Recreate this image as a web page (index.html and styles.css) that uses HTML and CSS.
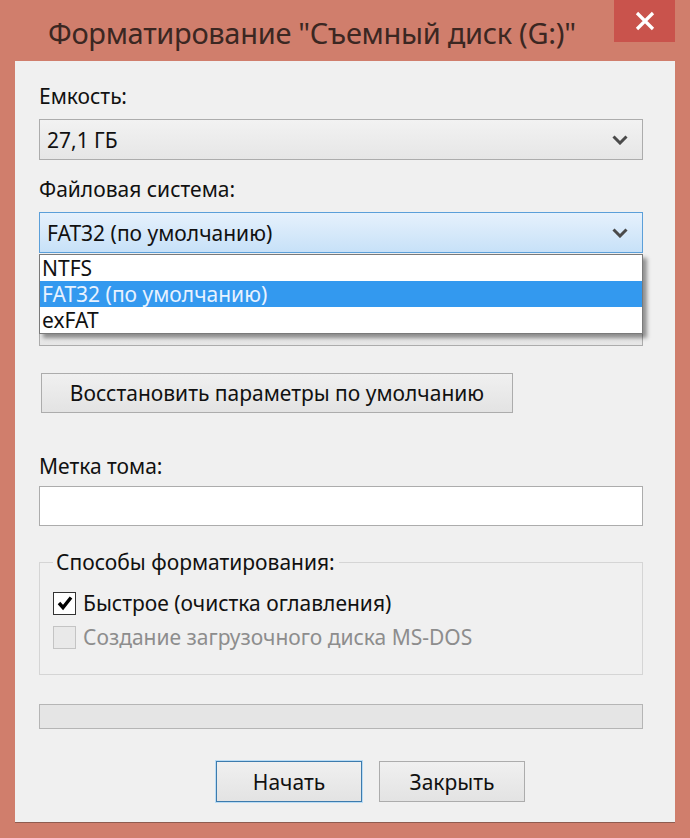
FILE: index.html
```html
<!DOCTYPE html>
<html lang="ru">
<head>
    <meta charset="UTF-8">
    <title>Форматирование</title>
    <link rel="stylesheet" href="styles.css">
</head>
<body>

<div class="window">
    <div class="titlebar">
        <h1 class="title">Форматирование "Съемный диск (G:)"</h1>
        <div class="close">
            <svg width="22" height="22" viewBox="0 0 22 22"><path d="M3 3 L19 19 M19 3 L3 19" stroke="#fff" stroke-width="3.2" fill="none"/></svg>
        </div>
    </div>

    <div class="client">
        <div class="label first">Емкость:</div>
        <div class="combo">
            <span>27,1 ГБ</span>
            <svg class="chev" width="16" height="10" viewBox="0 0 16 10"><path d="M1.5 1.5 L8 8 L14.5 1.5" stroke="#4a4a4a" stroke-width="3" fill="none"/></svg>
        </div>

        <div class="label">Файловая система:</div>
        <div class="fs-wrap">
            <div class="combo active">
                <span>FAT32 (по умолчанию)</span>
                <svg class="chev" width="16" height="10" viewBox="0 0 16 10"><path d="M1.5 1.5 L8 8 L14.5 1.5" stroke="#4a4a4a" stroke-width="3" fill="none"/></svg>
            </div>
            <ul class="droplist">
                <li>NTFS</li>
                <li class="selected">FAT32 (по умолчанию)</li>
                <li>exFAT</li>
            </ul>
        </div>

        <!-- cluster size row, covered by the open list -->
        <div class="label"></div>
        <div class="combo"></div>

        <button class="btn restore">Восстановить параметры по умолчанию</button>

        <div class="label volume">Метка тома:</div>
        <div class="textbox"></div>

        <fieldset class="group">
            <legend>Способы форматирования:</legend>
            <div class="check-row">
                <span class="box checked">
                    <svg width="18" height="18" viewBox="0 0 18 18"><path d="M3 9 L7 13.5 L15 3.5" stroke="#000" stroke-width="3.4" fill="none"/></svg>
                </span>
                <span>Быстрое (очистка оглавления)</span>
            </div>
            <div class="check-row disabled">
                <span class="box"></span>
                <span>Создание загрузочного диска MS-DOS</span>
            </div>
        </fieldset>

        <div class="progress"></div>

        <div class="actions">
            <button class="btn default">Начать</button>
            <button class="btn">Закрыть</button>
        </div>
    </div>
</div>

</body>
</html>
```

FILE: styles.css
```css
/* Basic Reset */
* {
    margin: 0;
    padding: 0;
    box-sizing: border-box;
}

body {
    width: 690px;
    height: 838px;
    background: #d07e6c;
    font-family: 'Noto Sans', 'Open Sans', sans-serif;
    color: #111;
    overflow: hidden;
}

.window {
    height: 838px;
    display: flex;
    flex-direction: column;
}

.titlebar {
    height: 61px;
    display: flex;
    align-items: flex-start;
    justify-content: space-between;
    padding-left: 48px;
    padding-right: 15px;
}

.title {
    font-weight: normal;
    font-size: 29px;
    line-height: 30px;
    margin-top: 18px;
    color: #3b2722;
    letter-spacing: -0.3px;
    white-space: nowrap;
}

.close {
    width: 61px;
    height: 42px;
    background: #c9534c;
    display: flex;
    align-items: center;
    justify-content: center;
}

.client {
    margin: 0 15px;
    height: 762px;
    background: #f0f0f0;
    border-bottom: 1px solid #8e5c50;
    padding: 22px 32px 0 24px;
    display: flex;
    flex-direction: column;
    align-items: flex-start;
    font-size: 21px;
}

.label {
    height: 26px;
    line-height: 26px;
    margin-top: 16px;
    white-space: nowrap;
}

.label.first {
    margin-top: 0;
}

.combo {
    width: 604px;
    height: 41px;
    margin-top: 10px;
    border: 1px solid #acacac;
    background: linear-gradient(#f2f2f2, #e6e6e6);
    display: flex;
    align-items: center;
    justify-content: space-between;
    padding: 0 14px 0 7px;
}

.combo.active {
    border-color: #5b9fd9;
    background: linear-gradient(#e6f1fc, #c7e1f8);
}

.fs-wrap {
    position: relative;
}

.droplist {
    position: absolute;
    left: 0;
    top: 52px;
    width: 604px;
    list-style: none;
    background: #fff;
    border: 1px solid #7a7a7a;
    box-shadow: 4px 4px 4px rgba(0, 0, 0, 0.4);
    z-index: 2;
}

.droplist li {
    height: 26px;
    line-height: 26px;
    padding-left: 2px;
}

.droplist li.selected {
    background: #3399ef;
    color: #e8f2ff;
}

.btn {
    font-family: inherit;
    font-size: 21px;
    color: #111;
    background: linear-gradient(#f0f0f0, #e3e3e3);
    border: 1px solid #acacac;
    height: 40px;
    cursor: pointer;
}

.restore {
    width: 472px;
    margin: 27px 0 0 2px;
}

.label.volume {
    margin-top: 40px;
}

.textbox {
    width: 604px;
    height: 40px;
    margin-top: 7px;
    background: #fff;
    border: 1px solid #acacac;
}

.group {
    width: 604px;
    margin-top: 23px;
    border: 1px solid #d5d5d5;
    padding: 11px 14px 20px 13px;
}

.group legend {
    padding: 0 4px 0 3px;
    margin-left: 0;
    line-height: 26px;
}

.check-row {
    display: flex;
    align-items: center;
    gap: 7px;
    height: 34px;
}

.box {
    width: 23px;
    height: 23px;
    border: 1px solid #333;
    background: #fff;
    display: flex;
    align-items: center;
    justify-content: center;
}

.check-row.disabled {
    color: #8d8d8d;
}

.check-row.disabled .box {
    border-color: #c4c4c4;
    background: #e9e9e9;
}

.progress {
    width: 604px;
    height: 25px;
    margin-top: 29px;
    border: 1px solid #b5b5b5;
    background: #e5e5e5;
}

.actions {
    display: flex;
    gap: 17px;
    margin: 32px 0 0 177px;
}

.actions .btn {
    width: 146px;
    height: 41px;
}

.btn.default {
    border-color: #3d7bad;
    box-shadow: 0 0 0 1px #b9dcf5;
}
```
